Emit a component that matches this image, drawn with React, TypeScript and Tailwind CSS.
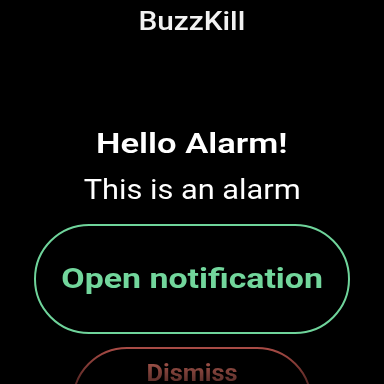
export default function App() {
  return (
    <div
      className="w-[384px] h-[384px] bg-black overflow-hidden relative flex flex-col items-center"
      style={{ fontFamily: "Roboto, 'Noto Sans', sans-serif" }}
    >
      <div className="mt-[9px] text-[25px] leading-none font-medium text-[#f2f2f2] scale-x-[1.19]">
        BuzzKill
      </div>
      <div className="mt-[97px] text-[27px] leading-none font-semibold text-white scale-x-[1.28]">
        Hello Alarm!
      </div>
      <div className="mt-[19px] text-[27px] leading-none text-white scale-x-[1.14]">
        This is an alarm
      </div>
      <div className="mt-[20px] w-[316px] h-[110px] shrink-0 rounded-full border-2 border-[#6fd49b] flex items-center justify-center">
        <span className="text-[28px] leading-none font-bold text-[#72d69c] scale-x-[1.21]">
          Open notification
        </span>
      </div>
      <div className="mt-[13px] w-[240px] h-[110px] shrink-0 rounded-full border-2 border-[#a94c46] flex justify-center pt-[12px]">
        <span className="text-[24px] leading-none font-bold scale-x-[1.06] bg-gradient-to-b from-[#c8675b] to-[#5a2a2c] bg-clip-text text-transparent">
          Dismiss
        </span>
      </div>
      <div className="absolute left-0 right-0 bottom-0 h-[36px] bg-gradient-to-b from-transparent to-black/50 pointer-events-none" />
    </div>
  );
}
